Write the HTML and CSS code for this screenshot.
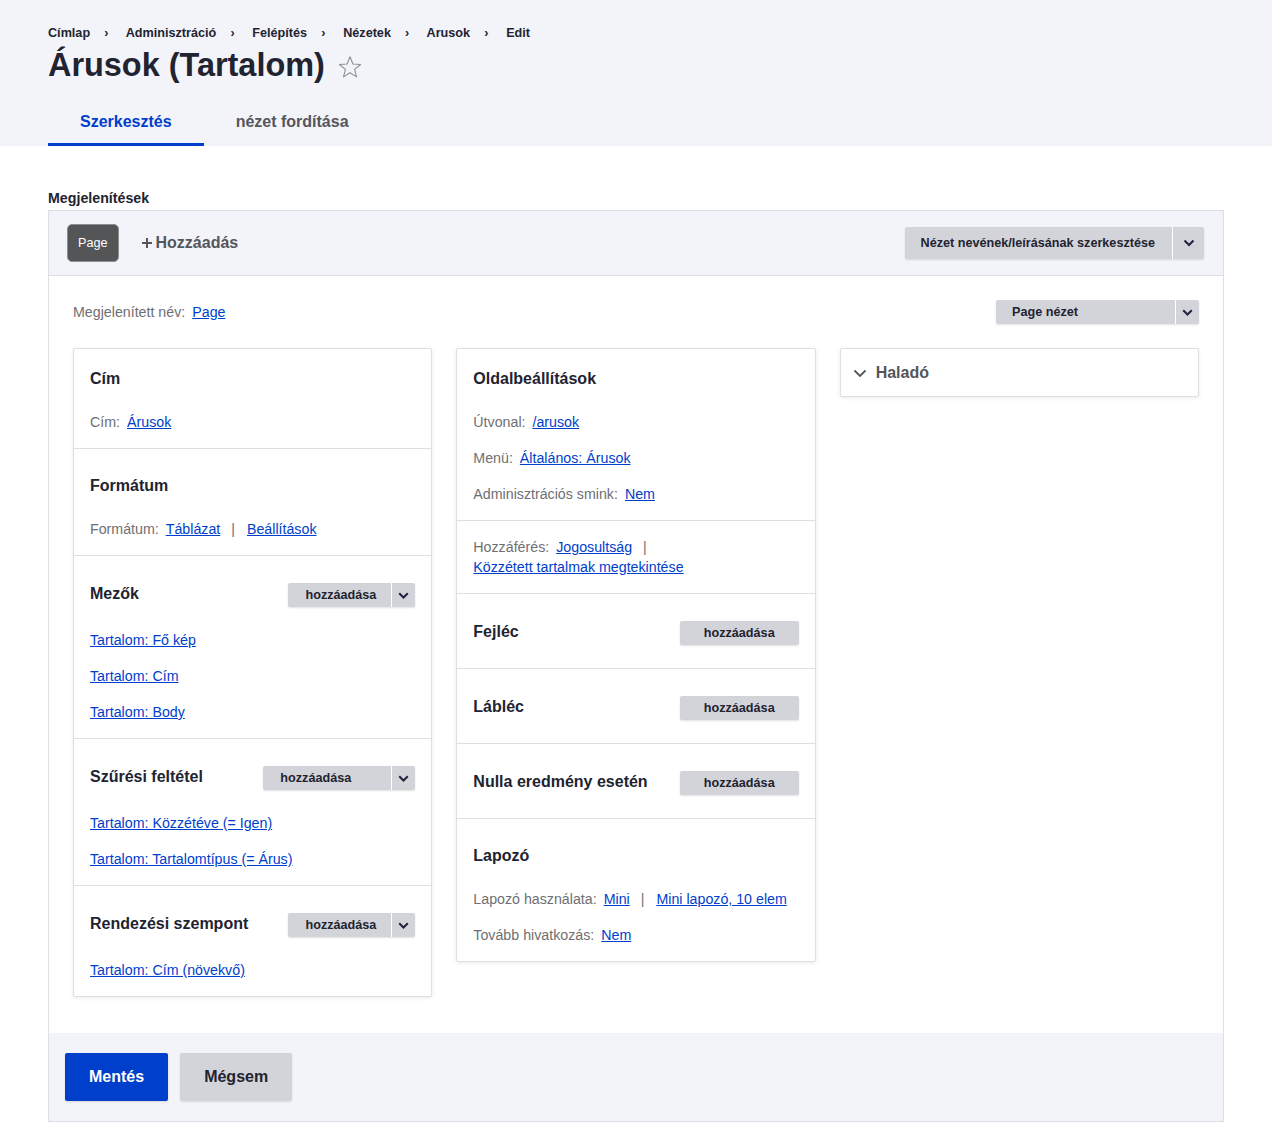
FILE: index.html
```html
<!DOCTYPE html>
<html lang="hu">
<head>
<meta charset="utf-8">
<title>Árusok (Tartalom)</title>
<link rel="stylesheet" href="styles.css">
</head>
<body>
<header class="page-head">
  <nav class="crumbs">
    <a href="#">Címlap</a><span class="crumb-sep">›</span>
    <a href="#">Adminisztráció</a><span class="crumb-sep">›</span>
    <a href="#">Felépítés</a><span class="crumb-sep">›</span>
    <a href="#">Nézetek</a><span class="crumb-sep">›</span>
    <a href="#">Arusok</a><span class="crumb-sep">›</span>
    <a href="#">Edit</a>
  </nav>
  <div class="title-row">
    <h1 class="page-title">Árusok (Tartalom)</h1>
    <svg class="star" width="24" height="24" viewBox="0 0 24 24"><path d="M12 1.8l2.9 7.2 7.6.5-5.9 4.9 1.9 7.5L12 17.8l-6.5 4.1 1.9-7.5-5.9-4.9 7.6-.5z" fill="none" stroke="#8e8f96" stroke-width="1.1" stroke-linejoin="round"/></svg>
  </div>
  <nav class="tabs">
    <a href="#" class="tab tab-active">Szerkesztés</a>
    <a href="#" class="tab">nézet fordítása</a>
  </nav>
</header>

<main class="content">
  <h2 class="group-label">Megjelenítések</h2>
  <div class="displays">
    <div class="disp-bar">
      <a href="#" class="page-tab">Page</a>
      <a href="#" class="add-display"><svg width="10" height="10" viewBox="0 0 10 10"><path d="M5 0v10M0 5h10" stroke="#55565b" stroke-width="2"/></svg>Hozzáadás</a>
      <div class="dropbtn dropbtn-lg bar-right">
        <span class="db-main">Nézet nevének/leírásának szerkesztése</span>
        <span class="db-arrow"><svg width="12" height="8" viewBox="0 0 12 8"><path d="M1.5 1.5l4.5 4.5 4.5-4.5" fill="none" stroke="#1f2340" stroke-width="2"/></svg></span>
      </div>
    </div>

    <div class="disp-body">
      <div class="name-row">
        <div class="line"><span class="lbl">Megjelenített név:</span><a href="#">Page</a></div>
        <div class="dropbtn">
          <span class="db-main db-main-wide">Page nézet</span>
          <span class="db-arrow"><svg width="11" height="7" viewBox="0 0 11 7"><path d="M1.2 1.2l4.3 4.3 4.3-4.3" fill="none" stroke="#1f2340" stroke-width="2"/></svg></span>
        </div>
      </div>

      <div class="columns">
        <div class="card">
          <section class="sec sec-first">
            <div class="sec-head"><h3>Cím</h3></div>
            <div class="line"><span class="lbl">Cím:</span><a href="#">Árusok</a></div>
          </section>
          <section class="sec">
            <div class="sec-head"><h3>Formátum</h3></div>
            <div class="line"><span class="lbl">Formátum:</span><a href="#">Táblázat</a><span class="sep">|</span> <a href="#">Beállítások</a></div>
          </section>
          <section class="sec">
            <div class="sec-head"><h3>Mezők</h3>
              <div class="dropbtn">
                <span class="db-main">hozzáadása</span>
                <span class="db-arrow"><svg width="11" height="7" viewBox="0 0 11 7"><path d="M1.2 1.2l4.3 4.3 4.3-4.3" fill="none" stroke="#1f2340" stroke-width="2"/></svg></span>
              </div>
            </div>
            <div class="line"><a href="#">Tartalom: Fő kép</a></div>
            <div class="line"><a href="#">Tartalom: Cím</a></div>
            <div class="line"><a href="#">Tartalom: Body</a></div>
          </section>
          <section class="sec">
            <div class="sec-head"><h3>Szűrési feltétel</h3>
              <div class="dropbtn">
                <span class="db-main db-main-filter">hozzáadása</span>
                <span class="db-arrow"><svg width="11" height="7" viewBox="0 0 11 7"><path d="M1.2 1.2l4.3 4.3 4.3-4.3" fill="none" stroke="#1f2340" stroke-width="2"/></svg></span>
              </div>
            </div>
            <div class="line"><a href="#">Tartalom: Közzétéve (= Igen)</a></div>
            <div class="line"><a href="#">Tartalom: Tartalomtípus (= Árus)</a></div>
          </section>
          <section class="sec">
            <div class="sec-head"><h3>Rendezési szempont</h3>
              <div class="dropbtn">
                <span class="db-main">hozzáadása</span>
                <span class="db-arrow"><svg width="11" height="7" viewBox="0 0 11 7"><path d="M1.2 1.2l4.3 4.3 4.3-4.3" fill="none" stroke="#1f2340" stroke-width="2"/></svg></span>
              </div>
            </div>
            <div class="line"><a href="#">Tartalom: Cím (növekvő)</a></div>
          </section>
        </div>

        <div class="card">
          <section class="sec sec-first">
            <div class="sec-head"><h3>Oldalbeállítások</h3></div>
            <div class="line"><span class="lbl">Útvonal:</span><a href="#">/arusok</a></div>
            <div class="line"><span class="lbl">Menü:</span><a href="#">Általános: Árusok</a></div>
            <div class="line"><span class="lbl">Adminisztrációs smink:</span><a href="#">Nem</a></div>
          </section>
          <section class="sec sec-plain">
            <div class="line"><span class="lbl">Hozzáférés:</span><a href="#">Jogosultság</a><span class="sep">|</span> <a href="#">Közzétett tartalmak megtekintése</a></div>
          </section>
          <section class="sec">
            <div class="sec-head"><h3>Fejléc</h3><a href="#" class="btn-sm">hozzáadása</a></div>
          </section>
          <section class="sec">
            <div class="sec-head"><h3>Lábléc</h3><a href="#" class="btn-sm">hozzáadása</a></div>
          </section>
          <section class="sec">
            <div class="sec-head"><h3>Nulla eredmény esetén</h3><a href="#" class="btn-sm">hozzáadása</a></div>
          </section>
          <section class="sec">
            <div class="sec-head"><h3>Lapozó</h3></div>
            <div class="line"><span class="lbl">Lapozó használata:</span><a href="#">Mini</a><span class="sep">|</span> <a href="#">Mini lapozó, 10 elem</a></div>
            <div class="line"><span class="lbl">Tovább hivatkozás:</span><a href="#">Nem</a></div>
          </section>
        </div>

        <div class="card card-adv">
          <svg class="adv-chev" width="14" height="9" viewBox="0 0 14 9"><path d="M1.5 1.5l5.5 5.5 5.5-5.5" fill="none" stroke="#55565b" stroke-width="1.8"/></svg>
          <span class="adv-title">Haladó</span>
        </div>
      </div>
    </div>

    <div class="actions">
      <a href="#" class="btn btn-primary">Mentés</a>
      <a href="#" class="btn btn-secondary">Mégsem</a>
    </div>
  </div>
</main>
</body>
</html>
```

FILE: styles.css
```css
* { box-sizing: border-box; }

body {
  margin: 0;
  font-family: "Liberation Sans", Arial, sans-serif;
  color: #222330;
  background: #fff;
}

a { color: #003ecc; }

/* Header */
.page-head {
  background: #f3f4f9;
  padding: 21px 48px 0;
}

.crumbs {
  font-size: 12.64px;
  font-weight: bold;
  line-height: 24px;
}
.crumbs a { color: #222330; text-decoration: none; }
.crumb-sep { margin: 0 14.2px; color: #222330; }

.title-row {
  display: flex;
  align-items: center;
  height: 40px;
}
.page-title {
  margin: 0;
  font-size: 32.43px;
  line-height: 40px;
  font-weight: bold;
  color: #222330;
}
.star { margin-left: 13px; margin-top: 3px; }

.tabs {
  display: flex;
  margin-top: 13px;
}
.tab {
  display: block;
  height: 48px;
  padding: 0 32px;
  line-height: 48px;
  font-size: 16px;
  font-weight: bold;
  color: #55565b;
  text-decoration: none;
  border-bottom: 3px solid transparent;
}
.tab-active {
  color: #003ecc;
  border-bottom-color: #003ecc;
}

/* Content */
.content {
  padding: 44px 48px 0;
}
.group-label {
  margin: 0 0 4px;
  font-size: 14.22px;
  line-height: 16px;
  font-weight: bold;
  color: #222330;
}

.displays {
  border: 1px solid #dedfe4;
}

.disp-bar {
  display: flex;
  align-items: center;
  height: 65px;
  padding: 0 19px 1px 18px;
  background: #f3f4f9;
  border-bottom: 1px solid #dedfe4;
}
.page-tab {
  display: block;
  height: 38px;
  line-height: 36px;
  padding: 0 10px;
  font-size: 12.64px;
  color: #fff;
  text-decoration: none;
  background: #545557;
  border: 1px solid #8d8e92;
  border-radius: 5px;
}
.add-display {
  display: flex;
  align-items: center;
  gap: 4px;
  margin-left: 23px;
  font-size: 16px;
  font-weight: bold;
  color: #55565b;
  text-decoration: none;
}
.bar-right { margin-left: auto; }

/* Drop buttons */
.dropbtn {
  display: inline-flex;
  height: 24px;
  background: #d3d4d9;
  border-radius: 2px;
  box-shadow: 0 1px 2px rgba(0, 0, 0, 0.12);
  font-size: 12.64px;
  font-weight: bold;
  color: #222330;
  flex: none;
}
.db-main {
  display: block;
  padding: 0 15px 0 17px;
  line-height: 24px;
  text-align: left;
}
.db-main-filter { width: 128px; }
.db-main-wide { width: 179px; padding-left: 16px; }
.db-arrow {
  display: flex;
  align-items: center;
  justify-content: center;
  width: 24px;
  border-left: 1px solid #fff;
}
.dropbtn-lg { height: 32px; }
.dropbtn-lg .db-main { line-height: 32px; padding: 0 17px 0 16px; }
.dropbtn-lg .db-arrow { width: 32px; }

.btn-sm {
  display: block;
  flex: none;
  height: 24px;
  line-height: 24px;
  padding: 0 24px;
  background: #d3d4d9;
  border-radius: 2px;
  box-shadow: 0 1px 2px rgba(0, 0, 0, 0.12);
  font-size: 12.64px;
  font-weight: bold;
  color: #222330;
  text-decoration: none;
}

.disp-body {
  padding: 24px 24px 36px;
}
.name-row {
  display: flex;
  align-items: center;
  justify-content: space-between;
  height: 24px;
  margin-bottom: 24px;
}

.columns {
  display: grid;
  grid-template-columns: repeat(3, 1fr);
  gap: 24px;
  align-items: start;
}

.card {
  background: #fff;
  border: 1px solid #dedfe4;
  border-radius: 2px;
  box-shadow: 0 1px 4px rgba(0, 0, 0, 0.08);
}

.sec {
  display: flex;
  flex-direction: column;
  gap: 16px;
  padding: 27px 16px 16px;
  border-top: 1px solid #dedfe4;
}
.sec-first { border-top: 0; padding-top: 20px; }
.sec-plain { padding-top: 16px; }

.sec-head {
  display: flex;
  align-items: baseline;
  justify-content: space-between;
  margin-bottom: 7px;
}
.sec-head h3 {
  margin: 0;
  font-size: 16px;
  line-height: 20px;
  font-weight: bold;
  color: #222330;
}

.line {
  font-size: 14.22px;
  line-height: 20px;
  color: #6f6f72;
}
.line a { white-space: nowrap; }
.lbl { margin-right: 7px; }
.sep { margin: 0 8px 0 11px; color: #6f6f72; }

.card-adv {
  display: flex;
  align-items: center;
  padding: 12px 12px 11px;
}
.adv-chev { margin-right: 9px; }
.adv-title {
  font-size: 16px;
  line-height: 24px;
  font-weight: bold;
  color: #55565b;
}

/* Footer actions */
.actions {
  display: flex;
  gap: 12px;
  padding: 20px 16px;
  background: #f3f4f9;
}
.btn {
  display: block;
  height: 48px;
  line-height: 48px;
  padding: 0 24px;
  border-radius: 2px;
  font-size: 16px;
  font-weight: bold;
  text-decoration: none;
  box-shadow: 0 1px 2px rgba(0, 0, 0, 0.12);
}
.btn-primary { background: #003ecc; color: #fff; }
.btn-secondary { background: #d3d4d9; color: #222330; }
```
